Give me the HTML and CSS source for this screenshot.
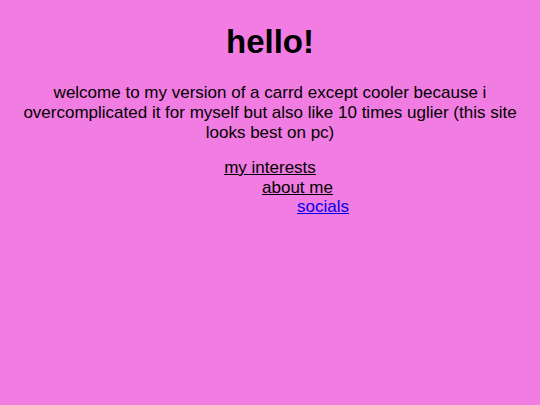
FILE: index.html
```html
<!DOCTYPE html>
<html>
<head>
<meta charset="utf-8">
<title>hello!</title>
<link rel="stylesheet" href="styles.css">
</head>
<body>
<h1 class="title">hello!</h1>
<p class="intro">welcome to my version of a carrd except cooler because i overcomplicated it for myself but also like 10 times uglier (this site looks best on pc)</p>
<nav class="links">
  <a class="link link-dark step-0" href="#interests">my interests</a>
  <a class="link link-dark step-1" href="#about">about me</a>
  <a class="link link-blue step-2" href="#socials">socials</a>
</nav>
</body>
</html>
```
FILE: styles.css
```css
html {
  background: #f27de2;
}
body {
  margin: 0 8px;
  padding-top: 23px;
  background: #f27de2;
  font-family: "Liberation Sans", Arial, sans-serif;
  color: #000;
  text-align: center;
}
.title {
  font-size: 33px;
  font-weight: bold;
  margin: 0 0 22px;
}
.intro {
  font-size: 17px;
  margin: 0 0 15px;
}
.links {
  display: flex;
  flex-direction: column;
  align-items: center;
  font-size: 17px;
  line-height: 19.5px;
}
.link-dark {
  color: #000;
}
.link-blue {
  color: #0000ee;
}
.step-1 {
  margin-left: 55px;
}
.step-2 {
  margin-left: 106px;
}
```
